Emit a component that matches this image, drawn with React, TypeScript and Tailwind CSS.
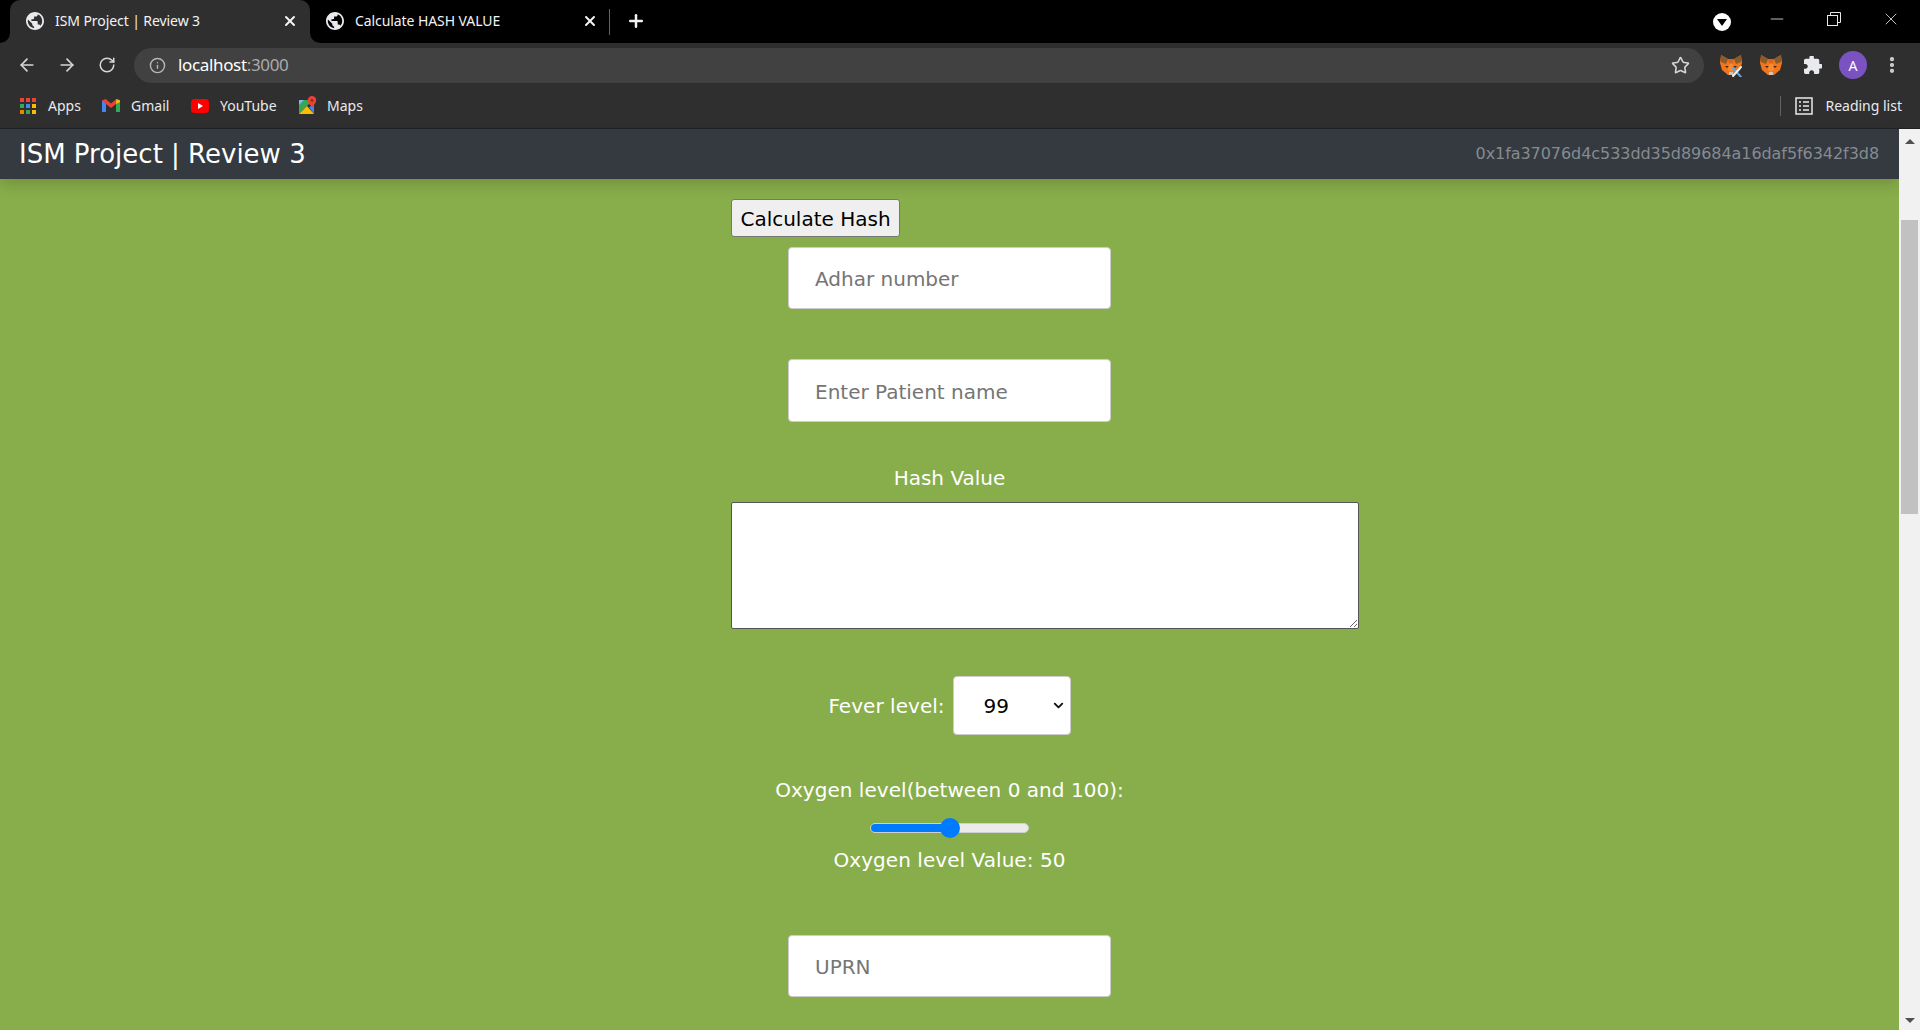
import React from 'react';
import { ArrowLeft, ArrowRight, RotateCw, Info, Star, X, Plus, EllipsisVertical, Minus, ChevronDown } from 'lucide-react';

const uiFont = 'font-["Noto_Sans",sans-serif]';
const pageFont = 'font-["DejaVu_Sans",sans-serif]';

// --- browser chrome icons ---
function Globe() {
  return (
    <svg width="18" height="18" viewBox="2 2 20 20" fill="#e8eaed" className="shrink-0">
      <path d="M12 2C6.48 2 2 6.48 2 12s4.48 10 10 10 10-4.48 10-10S17.52 2 12 2zm-1 17.93c-3.95-.49-7-3.85-7-7.93 0-.62.08-1.21.21-1.79L9 15v1c0 1.1.9 2 2 2v1.93zm6.9-2.54c-.26-.81-1-1.39-1.9-1.39h-1v-3c0-.55-.45-1-1-1H8v-2h2c.55 0 1-.45 1-1V7h2c1.1 0 2-.9 2-2v-.41c2.93 1.19 5 4.06 5 7.41 0 2.08-.8 3.97-2.1 5.39z" />
    </svg>
  );
}

function Fox({ tools }: { tools?: boolean }) {
  return (
    <svg width="24" height="24" viewBox="0 0 24 24" className="shrink-0">
      <polygon points="2,2 9,6 15,6 22,2 23,10 21,17 15,22 9,22 3,17 1,10" fill="#f0751c" />
      <polygon points="2,2 9,6 7,11 2,9" fill="#8d5a2b" />
      <polygon points="22,2 15,6 17,11 22,9" fill="#8d5a2b" />
      <polygon points="9,6 15,6 14,10 10,10" fill="#d9651a" />
      <polygon points="6,13 10,13 8,15" fill="#3c2a1a" />
      <polygon points="18,13 14,13 16,15" fill="#3c2a1a" />
      <polygon points="10,19 14,19 14,22 10,22" fill="#cfc5ba" />
      <polygon points="10,11 14,11 15,17 12,19 9,17" fill="#fb8a2e" />
      {tools && (
        <g strokeWidth="2" strokeLinecap="round">
          <path d="M14 15l8 9" stroke="#5fa8e8" />
          <path d="M22 14l-8 9" stroke="#f2f2f2" />
        </g>
      )}
    </svg>
  );
}

function AppsGrid() {
  const colors = ['#ea4335', '#ea4335', '#ea4335', '#34a853', '#4285f4', '#fbbc04', '#ea8600', '#34a853', '#fbbc04'];
  return (
    <div className="grid grid-cols-3 gap-[2px] w-[16px] shrink-0">
      {colors.map((c, i) => (
        <div key={i} className="w-[4px] h-[4px]" style={{ background: c }} />
      ))}
    </div>
  );
}

function GmailIcon() {
  return (
    <svg width="18" height="15" viewBox="0 0 18 15" className="shrink-0">
      <path d="M0 2.5V14h4V6l5 4 5-4v8h4V2.5L14.5 1 9 5.5 3.5 1z" fill="#ea4335" />
      <path d="M0 2.5V14h4V6z" fill="#4285f4" />
      <path d="M14 6v8h4V2.5z" fill="#34a853" />
      <path d="M14.5 1L18 2.5V4l-4 2z" fill="#fbbc04" />
    </svg>
  );
}

function YoutubeIcon() {
  return (
    <svg width="18" height="14" viewBox="0 0 18 14" className="shrink-0">
      <rect width="18" height="14" rx="3.5" fill="#ff0000" />
      <polygon points="7,4 12,7 7,10" fill="#fff" />
    </svg>
  );
}

function MapsIcon() {
  return (
    <svg width="18" height="20" viewBox="0 0 18 20" className="shrink-0">
      <polygon points="0,4 10,4 10,8 0,18" fill="#34a853" />
      <polygon points="0,18 8,10 15,18" fill="#fbbc04" />
      <polygon points="0,4 5,4 0,9" fill="#8ab4f8" />
      <polygon points="10,11 15,9 15,18" fill="#4285f4" />
      <path d="M13 0a4.2 4.2 0 0 1 4.2 4.2C17.2 7.5 13 11 13 11S8.800 7.500 8.800 4.200A4.200 4.200 0 0 1 13 0z" fill="#ea4335" />
      <circle cx="13" cy="4.200" r="1.500" fill="#a52714" />
    </svg>
  );
}

function PuzzleIcon() {
  return (
    <svg width="18" height="18" viewBox="2 2 20 20" fill="#e8eaed" className="shrink-0">
      <path d="M20.500 11H19V7c0-1.100-.9-2-2-2h-4V3.500C13 2.120 11.880 1 10.500 1S8 2.120 8 3.500V5H4c-1.100 0-1.990.9-1.990 2v3.800H3.500c1.490 0 2.700 1.210 2.700 2.700s-1.210 2.700-2.700 2.700H2V20c0 1.100.9 2 2 2h3.800v-1.500c0-1.490 1.210-2.700 2.700-2.700 1.490 0 2.700 1.210 2.700 2.700V22H17c1.100 0 2-.9 2-2v-4h1.500c1.380 0 2.500-1.120 2.500-2.500S21.880 11 20.500 11z" />
    </svg>
  );
}

function ReadingListIcon() {
  return (
    <svg width="18" height="18" viewBox="0 0 18 18" fill="none" stroke="#e8eaed" strokeWidth="1.500" className="shrink-0">
      <rect x="1" y="1" width="16" height="16" />
      <path d="M4 5h2M8 5h6M4 9h2M8 9h6M4 13h2M8 13h6" />
    </svg>
  );
}

function RestoreIcon() {
  return (
    <svg width="14" height="14" viewBox="0 0 14 14" fill="none" stroke="#e8e8e8" strokeWidth="1">
      <rect x="0.500" y="3.500" width="10" height="10" />
      <path d="M3.500 3.500v-3h10v10h-3" />
    </svg>
  );
}

// little curve that joins the active tab to the toolbar
function TabFlare({ side }: { side: 'left' | 'right' }) {
  return (
    <div className={`absolute bottom-0 w-[10px] h-[10px] bg-[#2f2f2f] ${side === 'left' ? '-left-[10px]' : '-right-[10px]'}`}>
      <div className={`w-full h-full bg-black ${side === 'left' ? 'rounded-br-[10px]' : 'rounded-bl-[10px]'}`} />
    </div>
  );
}

function Tab({ title, active }: { title: string; active?: boolean }) {
  return (
    <div className={`relative w-[300px] h-[43px] flex items-center pl-[16px] pr-[12px] pb-[2px] ${active ? 'bg-[#2f2f2f] rounded-t-[10px]' : ''}`}>
      {active && <TabFlare side="left" />}
      {active && <TabFlare side="right" />}
      <Globe />
      <span className="ml-[11px] flex-1 text-[14px] text-[#f1f3f4] whitespace-nowrap tracking-[-0.08px]">{title}</span>
      <X size={16} strokeWidth={3} color="#f1f3f4" />
    </div>
  );
}

function Bookmark({ icon, label, width, gap }: { icon: React.ReactNode; label: string; width: string; gap: string }) {
  return (
    <div className={`flex items-center ${gap} ${width}`}>
      {icon}
      <span className="text-[14px] text-[#e8eaed]">{label}</span>
    </div>
  );
}

function BrowserChrome() {
  return (
    <div className={`${uiFont} shrink-0`}>
      {/* tab strip */}
      <div className="h-[43px] bg-black flex items-center pl-[10px]">
        <Tab title="ISM Project | Review 3" active />
        <Tab title="Calculate HASH VALUE" />
        <div className="w-px h-[26px] bg-[#5f6368] -ml-px" />
        <Plus size={20} strokeWidth={3} color="#f1f3f4" className="ml-[16px] mb-[2px]" />
        <div className="flex-1" />
        <div className="w-[18px] h-[18px] rounded-full bg-white flex items-center justify-center">
          <div className="w-0 h-0 border-x-[5px] border-x-transparent border-t-[7px] border-t-black mt-[2px]" />
        </div>
        <div className="flex items-center ml-[36px] mr-[19px] mb-[6px] gap-[40px]">
          <Minus size={20} strokeWidth={1} color="#e8e8e8" />
          <RestoreIcon />
          <X size={20} strokeWidth={1} color="#e8e8e8" />
        </div>
      </div>

      {/* toolbar */}
      <div className="h-[44px] bg-[#2f2f2f] flex items-center pl-[17px] pr-[18px]">
        <ArrowLeft size={20} color="#d5d7da" />
        <ArrowRight size={20} color="#d5d7da" className="ml-[20px]" />
        <RotateCw size={18} color="#d5d7da" className="ml-[21px]" />
        <div className="ml-[18px] flex-1 h-[35px] rounded-full bg-[#414141] flex items-center pl-[15px] pr-[14px]">
          <Info size={17} color="#b5b7ba" />
          <span className="ml-[12px] text-[17px] text-white tracking-[-0.35px]">
            localhost<span className="text-[#a8abaf]">:3000</span>
          </span>
          <div className="flex-1" />
          <Star size={19} color="#d5d7da" />
        </div>
        <div className="ml-[15px] w-[24px] flex justify-center"><Fox tools /></div>
        <div className="ml-[16px] w-[24px] flex justify-center"><Fox /></div>
        <div className="ml-[21px]"><PuzzleIcon /></div>
        <div className="ml-[17px] w-[28px] h-[28px] rounded-full bg-[#7b52c1] text-white text-[14px] flex items-center justify-center">A</div>
        <EllipsisVertical size={20} strokeWidth={3} color="#d5d7da" className="ml-[15px]" />
      </div>

      {/* bookmarks bar */}
      <div className="h-[42px] pb-[4px] bg-[#2f2f2f] border-b border-[#1f2124] flex items-center pl-[20px] pr-[18px]">
        <Bookmark icon={<AppsGrid />} label="Apps" width="w-[82px]" gap="gap-[12px]" />
        <Bookmark icon={<GmailIcon />} label="Gmail" width="w-[89px]" gap="gap-[11px]" />
        <Bookmark icon={<YoutubeIcon />} label="YouTube" width="w-[108px]" gap="gap-[11px]" />
        <Bookmark icon={<MapsIcon />} label="Maps" width="w-[90px]" gap="gap-[10px]" />
        <div className="flex-1" />
        <div className="w-px h-[20px] bg-[#5f6368] mr-[14px]" />
        <ReadingListIcon />
        <span className="ml-[12px] text-[14px] text-[#e8eaed]">Reading list</span>
      </div>
    </div>
  );
}

// --- page ---
function TextInput({ placeholder, tall }: { placeholder: string; tall?: boolean }) {
  return (
    <input
      placeholder={placeholder}
      className={`block w-[323px] ${tall ? 'h-[63px]' : 'h-[62px]'} bg-white border border-[#cccccc] rounded-[4px] pl-[26px] pr-[26px] pt-[2px] text-[20px] placeholder:text-[#757575] outline-none`}
    />
  );
}

function Scrollbar() {
  return (
    <div className="w-[21px] shrink-0 bg-[#f1f1f1] flex flex-col items-center relative z-20">
      <div className="h-[24px] flex items-center justify-center">
        <div className="w-0 h-0 border-x-[5px] border-x-transparent border-b-[5px] border-b-[#505050]" />
      </div>
      <div className="mt-[67px] w-[17px] h-[294px] bg-[#c1c1c1]" />
      <div className="flex-1" />
      <div className="h-[20px] flex items-center justify-center">
        <div className="w-0 h-0 border-x-[5px] border-x-transparent border-t-[5px] border-t-[#505050]" />
      </div>
    </div>
  );
}

export default function App() {
  return (
    <div className="h-[1030px] flex flex-col overflow-hidden">
      <BrowserChrome />

      <div className={`flex-1 flex min-h-0 ${pageFont}`}>
        <div className="flex-1 min-w-0 flex flex-col bg-[#88ae4b]">
          <nav className="relative z-10 h-[50px] shrink-0 bg-[#343a40] flex items-center justify-between pl-[19px] pr-[20px] shadow-[0_6px_14px_rgba(0,0,0,0.16)]">
            <span className="text-[26px] text-white">ISM Project | Review 3</span>
            <span className="text-[16px] text-[#868b90] tracking-[-0.06px]">0x1fa37076d4c533dd35d89684a16daf5f6342f3d8</span>
          </nav>

          <main className="flex-1 min-h-0 overflow-hidden flex flex-col items-center pt-[20px]">
            <div className="w-[437px] flex flex-col items-center">
              <button className="self-start h-[38px] w-[169px] pt-[1px] bg-[#efefef] border border-[#767676] rounded-[3px] text-[20px] text-black whitespace-nowrap">
                Calculate Hash
              </button>

              <div className="mt-[10px]"><TextInput placeholder="Adhar number" /></div>
              <div className="mt-[50px]"><TextInput placeholder="Enter Patient name" tall /></div>

              <label className="mt-[44px] h-[24px] leading-[24px] text-[20px] text-white">Hash Value</label>
              <textarea className="mt-[12px] self-start w-[628px] h-[127px] max-w-none shrink-0 bg-white border border-[#555555] rounded-[2px] resize-y outline-none" />

              <div className="mt-[47px] flex items-center">
                <label className="text-[20px] text-white tracking-[0.04px]">Fever level:</label>
                <div className="relative ml-[8px] w-[118px] h-[59px]">
                  <div className="w-full h-full bg-white border border-[#cccccc] rounded-[4px] pl-[30px] flex items-center text-[20px] text-black">99</div>
                  <ChevronDown size={15} strokeWidth={3} color="#111" className="absolute right-[5px] top-[22px]" />
                </div>
              </div>

              <label className="mt-[43px] h-[24px] leading-[24px] text-[20px] text-white whitespace-nowrap tracking-[0.04px]">
                Oxygen level(between 0 and 100):
              </label>
              <div className="relative mt-[21px] w-[159px] h-[10px] rounded-full bg-[#ebebeb] border border-[#cfcfcf]">
                <div className="w-[80px] h-full rounded-l-full bg-[#007bff]" />
                <div className="absolute left-[69px] -top-[6px] w-[20px] h-[20px] rounded-full bg-[#007bff]" />
              </div>
              <div className="mt-[15px] h-[24px] leading-[24px] text-[20px] text-white whitespace-nowrap tracking-[0.05px]">Oxygen level Value: 50</div>

              <div className="mt-[63px]"><TextInput placeholder="UPRN" /></div>
            </div>
          </main>
        </div>
        <Scrollbar />
      </div>
    </div>
  );
}
